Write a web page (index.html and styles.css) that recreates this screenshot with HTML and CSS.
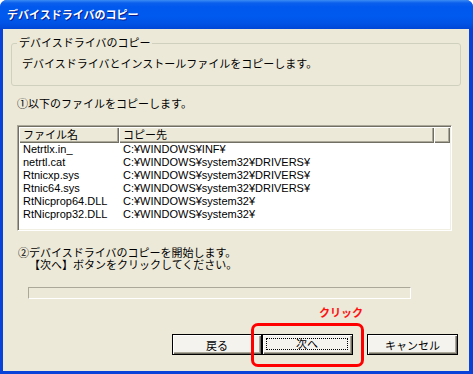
FILE: index.html
```html
<!DOCTYPE html>
<html lang="ja">
<head>
  <meta charset="UTF-8">
  <title>デバイスドライバのコピー</title>
  <link rel="stylesheet" href="styles.css">
</head>
<body>

  <div class="window">
    <div class="titlebar">デバイスドライバのコピー</div>

    <div class="client">
      <fieldset class="group">
        <legend>デバイスドライバのコピー</legend>
        <p>デバイスドライバとインストールファイルをコピーします。</p>
      </fieldset>

      <p class="step">①以下のファイルをコピーします。</p>

      <div class="list">
        <div class="list-head">
          <span class="col-name">ファイル名</span>
          <span class="col-dest">コピー先</span>
          <span class="col-fill"></span>
        </div>
        <div class="row"><span class="col-name">Netrtlx.in_</span><span class="col-dest">C:¥WINDOWS¥INF¥</span></div>
        <div class="row"><span class="col-name">netrtl.cat</span><span class="col-dest">C:¥WINDOWS¥system32¥DRIVERS¥</span></div>
        <div class="row"><span class="col-name">Rtnicxp.sys</span><span class="col-dest">C:¥WINDOWS¥system32¥DRIVERS¥</span></div>
        <div class="row"><span class="col-name">Rtnic64.sys</span><span class="col-dest">C:¥WINDOWS¥system32¥DRIVERS¥</span></div>
        <div class="row"><span class="col-name">RtNicprop64.DLL</span><span class="col-dest">C:¥WINDOWS¥system32¥</span></div>
        <div class="row"><span class="col-name">RtNicprop32.DLL</span><span class="col-dest">C:¥WINDOWS¥system32¥</span></div>
      </div>

      <p class="step2">②デバイスドライバのコピーを開始します。<br><span class="indent">【次へ】ボタンをクリックしてください。</span></p>

      <div class="progress"></div>

      <div class="buttons">
        <button class="btn btn-back">戻る</button>
        <button class="btn btn-next"><span class="focus">次へ</span></button>
        <button class="btn btn-cancel">キャンセル</button>
        <!-- annotation -->
        <div class="callout-label">クリック</div>
        <div class="callout-box"></div>
      </div>
    </div>
  </div>

</body>
</html>
```

FILE: styles.css
```css
body {
  margin: 0;
  background: #ffffff;
  font-family: "Liberation Sans", "Noto Sans CJK JP", sans-serif;
  font-size: 11px;
  color: #000;
}

.window {
  width: 473px;
  height: 374px;
  background: #0842d8;
  border-radius: 7px 7px 0 0;
  overflow: hidden;
}

.titlebar {
  height: 29px;
  line-height: 30px;
  padding-left: 7px;
  color: #fff;
  font-weight: bold;
  font-size: 11px;
  text-shadow: 1px 1px 0 #0a1a8a;
  background: linear-gradient(#3b8cf5 0, #0a5fec 3px, #0058ee 7px, #005aef 16px, #0052e4 24px, #0046d5 29px);
}

.client {
  margin: 0 4px 0 3px;
  height: 342px;
  background: #ece9d8;
  overflow: hidden;
}

.group {
  margin: 8px 8px 0 8px;
  padding: 0 0 0 10px;
  border: 1px solid #d0d0bf;
  border-radius: 3px;
}

.group legend {
  padding: 0 2px;
  margin-left: -5px;
  line-height: 12px;
}

.group p {
  margin: 9px 0 15px;
  line-height: 12px;
}

.step {
  margin: 12px 0 0 14px;
  line-height: 12px;
}

.list {
  margin: 15px 0 0 14px;
  width: 435px;
  height: 106px;
  box-sizing: border-box;
  background: #fff;
  border: 1px solid;
  border-color: #aca899 #fff #fff #aca899;
  box-shadow: inset 1px 1px 0 #716f64, inset -1px -1px 0 #f1efe2;
  padding: 1px;
}

.list-head {
  display: flex;
  height: 16px;
  line-height: 16px;
  background: #ece9d8;
}

.list-head span {
  box-shadow: inset 1px 1px 0 #fff, inset -1px -1px 0 #716f64, inset -2px -2px 0 #aca899;
}

.col-name {
  width: 100px;
  padding-left: 4px;
  box-sizing: border-box;
  flex-shrink: 0;
}

.col-dest {
  width: 315px;
  padding-left: 4px;
  box-sizing: border-box;
  flex-shrink: 0;
}

.col-fill {
  flex: 1;
}

.row {
  display: flex;
  height: 13px;
  line-height: 13px;
  white-space: nowrap;
}

.step2 {
  margin: 16px 0 0 15px;
  line-height: 12px;
}

.step2 .indent {
  padding-left: 11px;
}

.progress {
  margin: 16px 0 0 25px;
  width: 383px;
  height: 12px;
  box-sizing: border-box;
  border: 1px solid;
  border-color: #aca899 #fff #fff #aca899;
}

.buttons {
  position: relative;
  display: flex;
  margin: 35px 0 0 169px;
}

.btn {
  height: 21px;
  padding: 0;
  font-family: inherit;
  font-size: 11px;
  color: #000;
  background: #f4f3ee;
  border: 1px solid #000;
  border-radius: 0;
  box-shadow: inset 1px 1px 0 #fff, inset -1px -1px 0 #716f64, inset -2px -2px 0 #aca899;
}

.btn-back {
  width: 90px;
}

.btn-next {
  width: 91px;
  padding: 3px 4px 4px 3px;
}

.btn-next .focus {
  display: block;
  height: 100%;
  line-height: 11px;
  border: 1px dotted #000;
  box-sizing: border-box;
}

.btn-cancel {
  width: 91px;
  margin-left: 14px;
}

.callout-label {
  position: absolute;
  left: 147px;
  top: -27px;
  line-height: 12px;
  font-size: 11px;
  font-weight: bold;
  color: #ff1010;
}

.callout-box {
  position: absolute;
  left: 79px;
  top: -11px;
  width: 113px;
  height: 44px;
  box-sizing: border-box;
  border: 3px solid #ff0000;
  border-radius: 7px;
}
```
